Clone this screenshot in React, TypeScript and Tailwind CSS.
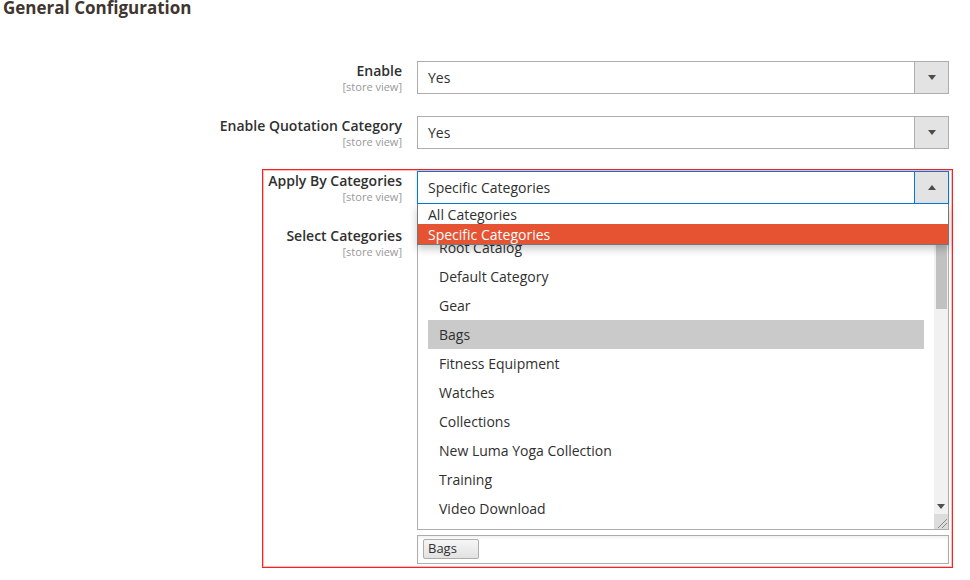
import React from 'react';

const font = { fontFamily: '"Open Sans", "Noto Sans", sans-serif' };

function Arrow({ up = false }: { up?: boolean }) {
  return (
    <svg width="8" height="5" viewBox="0 0 8 5">
      {up ? <polygon points="0,5 8,5 4,0" fill="#514943" /> : <polygon points="0,0 8,0 4,5" fill="#514943" />}
    </svg>
  );
}

function Label({ title, width }: { title: string; width: string }) {
  return (
    <div className={`${width} shrink-0 flex flex-col items-end whitespace-nowrap`}>
      <span className="text-[14px] leading-5 font-semibold text-[#303030]">{title}</span>
      <span className="text-[11px] leading-[10px] text-[#999999] mt-px">[store view]</span>
    </div>
  );
}

function Select({ value }: { value: string }) {
  return (
    <div className="w-[532px] h-[33px] flex border border-[#adadad] bg-white">
      <div className="flex-1 flex items-center pl-[10px] text-[14px] text-[#303030]">{value}</div>
      <div className="w-[34px] flex items-center justify-center bg-[#e3e3e3] border-l border-[#adadad]">
        <Arrow />
      </div>
    </div>
  );
}

function App() {
  const categories = [
    'Root Catalog',
    'Default Category',
    'Gear',
    'Bags',
    'Fitness Equipment',
    'Watches',
    'Collections',
    'New Luma Yoga Collection',
    'Training',
    'Video Download',
  ];

  return (
    <div className="w-[970px] h-[580px] bg-white overflow-hidden" style={font}>
      <h2 className="pl-[3px] text-[17px] leading-[16px] font-bold text-[#41362f]">General Configuration</h2>

      <div className="mt-[45px] flex flex-col">
        {/* Enable */}
        <div className="flex gap-[15px]">
          <Label title="Enable" width="w-[402px]" />
          <Select value="Yes" />
        </div>

        {/* Enable Quotation Category */}
        <div className="mt-[22px] flex gap-[15px]">
          <Label title="Enable Quotation Category" width="w-[402px]" />
          <Select value="Yes" />
        </div>

        {/* Highlighted block */}
        <div className="mt-5 ml-[262px] w-[691px] border border-[#ff1f1f] shadow-[inset_0_0_0_1px_rgba(255,110,110,0.45)] pt-px pr-[3px] pb-[3px]">
          <div className="flex gap-[15px]">
            <Label title="Apply By Categories" width="w-[139px]" />
            <div className="relative z-10">
              <div className="w-[532px] h-[33px] flex border border-[#007bdb] bg-white shadow-[0_0_3px_rgba(0,0,0,0.15)]">
                <div className="flex-1 flex items-center pl-[10px] text-[14px] text-[#303030]">Specific Categories</div>
                <div className="w-[34px] flex items-center justify-center bg-[#e3e3e3] border-l border-[#007bdb]">
                  <Arrow up />
                </div>
              </div>
              {/* open dropdown */}
              <div className="absolute left-0 top-[33px] w-[532px] bg-white border border-[#767676] border-t-0 shadow-[0_4px_8px_rgba(0,0,0,0.22)] text-[14px]">
                <div className="h-5 flex items-center pl-[10px] text-[#303030]">All Categories</div>
                <div className="h-5 flex items-center pl-[10px] bg-[#e55333] text-white">Specific Categories</div>
              </div>
            </div>
          </div>

          <div className="mt-[22px] flex gap-[15px]">
            <Label title="Select Categories" width="w-[139px]" />
            <div className="w-[532px] flex flex-col">
              <div className="h-[304px] flex border border-[#adadad] bg-white">
                <div className="flex-1 py-[6px] pl-[10px] pr-[10px] overflow-hidden">
                  {categories.map((c) => (
                    <div
                      key={c}
                      className={`h-[29px] flex items-center pl-[11px] text-[14px] text-[#303030] ${c === 'Bags' ? 'bg-[#cacaca]' : ''}`}
                    >
                      {c}
                    </div>
                  ))}
                </div>
                {/* scrollbar */}
                <div className="w-[14px] flex flex-col bg-[#f1f1f1]">
                  <div className="h-[15px]" />
                  <div className="h-[66px] mt-px ml-[2px] mr-px bg-[#c1c1c1]" />
                  <div className="flex-1" />
                  <div className="h-[15px] flex items-center justify-center">
                    <svg width="8" height="5" viewBox="0 0 8 5">
                      <polygon points="0,0 8,0 4,5" fill="#505050" />
                    </svg>
                  </div>
                  <div className="h-[15px] bg-[#dcdcdc] flex items-end justify-end">
                    <svg width="14" height="14" viewBox="0 0 14 14">
                      <line x1="4" y1="13" x2="13" y2="4" stroke="#8a8a8a" strokeWidth="1" />
                      <line x1="8" y1="13" x2="13" y2="8" stroke="#8a8a8a" strokeWidth="1" />
                    </svg>
                  </div>
                </div>
              </div>
              <div className="mt-[5px] h-[29px] border border-[#adadad] bg-white shadow-[inset_0_2px_3px_rgba(0,0,0,0.06)] pt-[3px] pl-[5px]">
                <div className="w-[56px] h-[20px] flex items-center pl-[4px] text-[13px] text-[#303030] border border-[#adadad] rounded-[2px] bg-gradient-to-b from-[#f6f6f6] to-[#e2e2e2]">
                  Bags
                </div>
              </div>
            </div>
          </div>
        </div>
      </div>
    </div>
  );
}

export default App;
